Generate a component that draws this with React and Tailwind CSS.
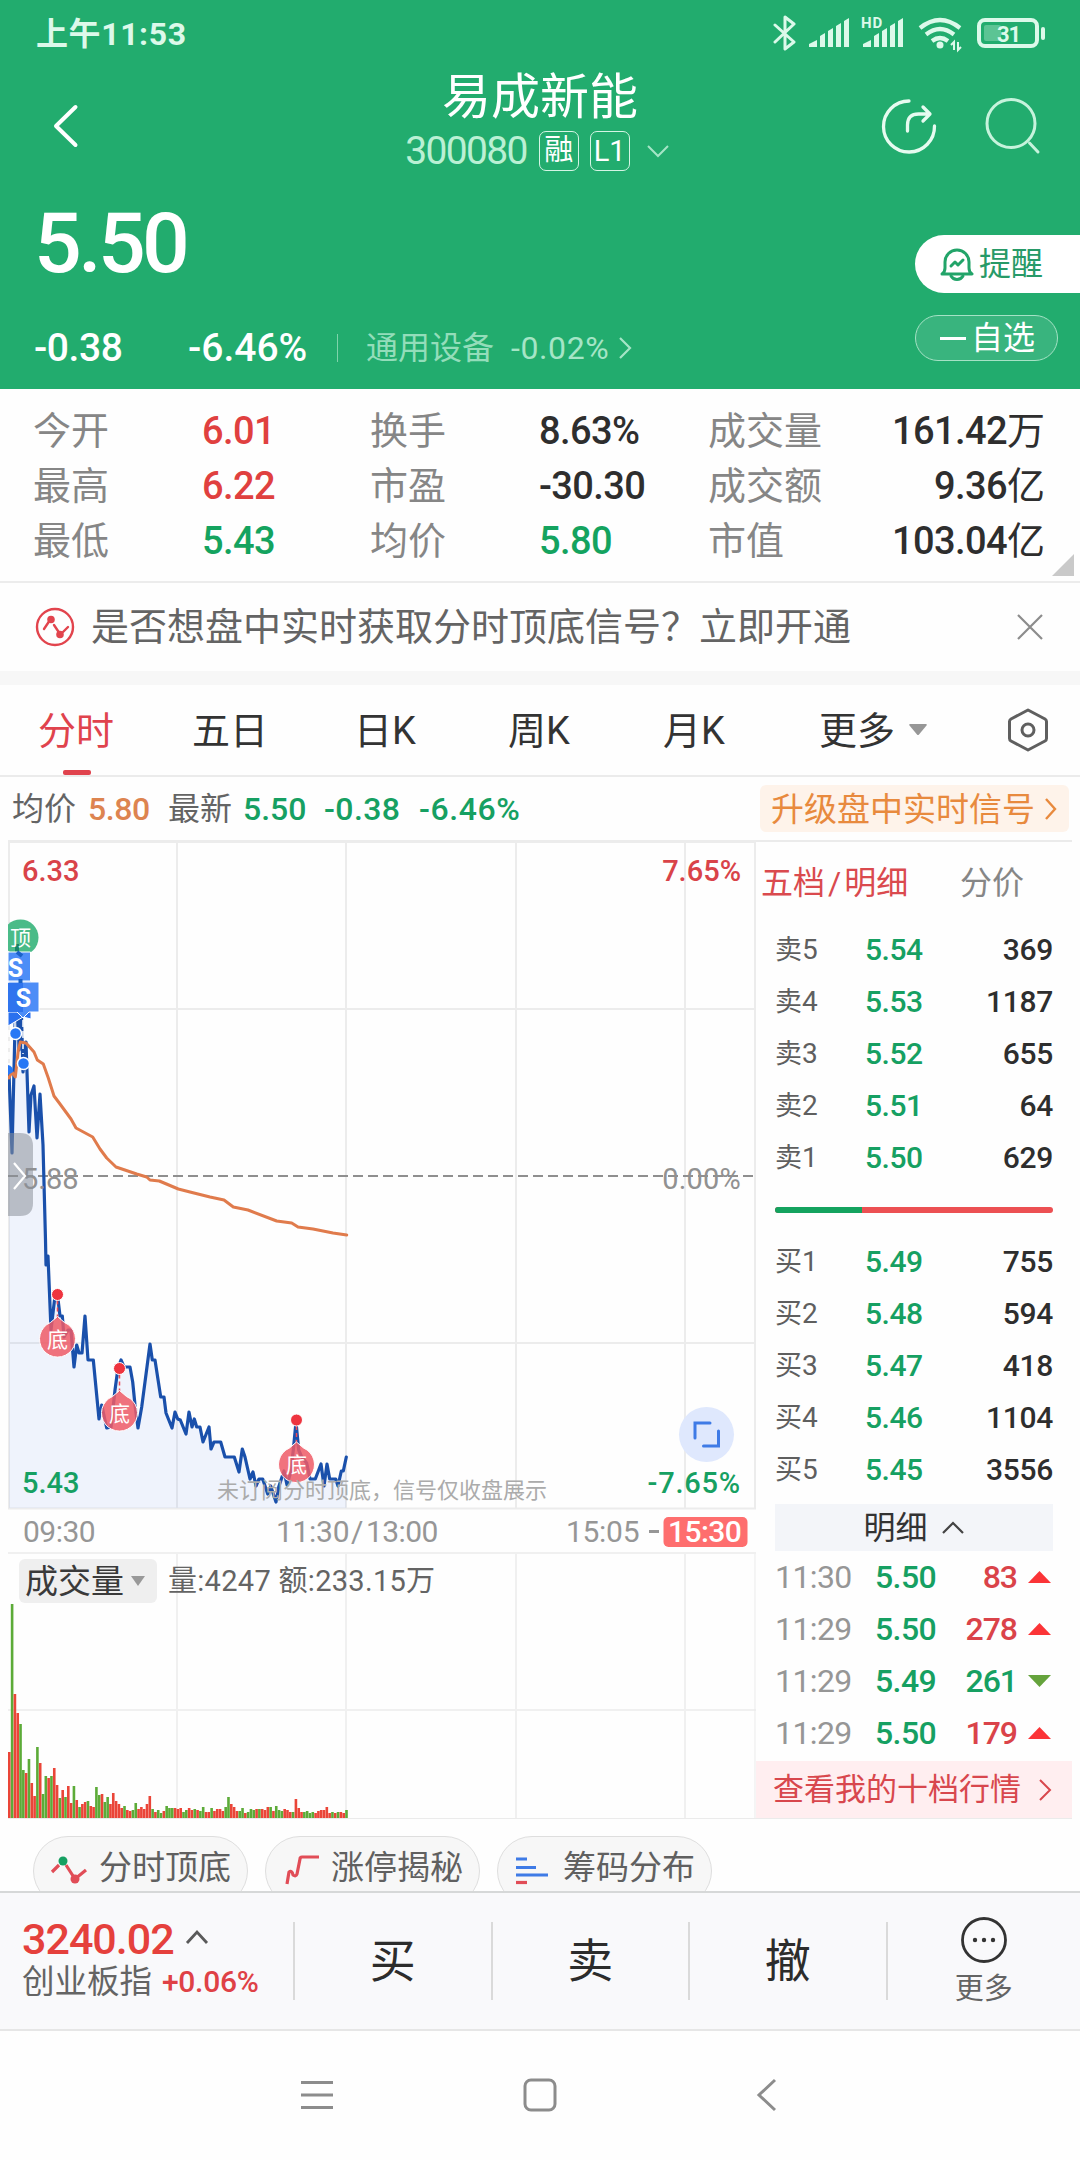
import React from 'react';
import clsx from 'clsx';

const stats = [
  { label: '今开', value: '6.01', color: 'text-[#e0403f]' },
  { label: '换手', value: '8.63%', color: 'text-[#2e2e2e]' },
  { label: '成交量', value: '161.42', unit: '万', color: 'text-[#2e2e2e]' },
  { label: '最高', value: '6.22', color: 'text-[#e0403f]' },
  { label: '市盈', value: '-30.30', color: 'text-[#2e2e2e]' },
  { label: '成交额', value: '9.36', unit: '亿', color: 'text-[#2e2e2e]' },
  { label: '最低', value: '5.43', color: 'text-[#14a35f]' },
  { label: '均价', value: '5.80', color: 'text-[#14a35f]' },
  { label: '市值', value: '103.04', unit: '亿', color: 'text-[#2e2e2e]' }
];

const sells = [
  ['卖5', '5.54', 369],
  ['卖4', '5.53', 1187],
  ['卖3', '5.52', 655],
  ['卖2', '5.51', 64],
  ['卖1', '5.50', 629]
];

const buys = [
  ['买1', '5.49', 755],
  ['买2', '5.48', 594],
  ['买3', '5.47', 418],
  ['买4', '5.46', 1104],
  ['买5', '5.45', 3556]
];

const trades = [
  { time: '11:30', price: '5.50', qty: 83, up: true },
  { time: '11:29', price: '5.50', qty: 278, up: true },
  { time: '11:29', price: '5.49', qty: 261, up: false },
  { time: '11:29', price: '5.50', qty: 179, up: true }
];

const pricePoints =
  '9,1073 12,1153 15,1027 17,945 19,1050 20.5,980 23,1072 26,1042 29,1132 31,1095 34,1086 37,1138 40,1094 43,1145 45.5,1240 ' +
  '46,1265 48,1256 51,1330 54.5,1300 57.5,1295 60,1316 62.3,1316 64,1337 68,1330 71,1330 74,1367 76.7,1345 79,1353 82,1353 ' +
  '85,1316 88,1360 93.3,1360 99,1419 101.7,1405 106.7,1428 111,1427 115,1390 118,1368 121,1360 124,1367 130,1367 132.7,1382 ' +
  '135,1405 138,1428 141.7,1407 150,1344 152.3,1360 155,1360 160.7,1397 164,1397 166,1413 172,1428 175,1412 177.7,1419 ' +
  '180.3,1420 186,1434 189,1412 192,1427 194.3,1419 196.7,1427 200,1427 203,1442 209,1427 211,1449 214,1442 220.7,1442 ' +
  '225,1457 234.3,1457 239,1472 242.3,1449 245,1457 250,1479 253,1472 256,1486 259,1479 262.7,1479 267.7,1494 270.7,1486 ' +
  '273,1493 276,1502 278.7,1487 284,1471 287,1485 290.7,1472 293.3,1450 296,1422 298.7,1450 301.7,1457 306.7,1463 310,1479 ' +
  '315.3,1479 321,1464 324,1486 327,1464 329.7,1479 335.7,1479 338,1486 341.3,1471 343.3,1471 346.3,1457';

const avgPoints =
  '8.7,1078 12,1072 15.3,1077 18.3,1050 20.3,1042 26,1043 34,1052 37.3,1060 43.3,1064 48.3,1078 54,1096 60,1104 71,1119 ' +
  '76,1128 92.7,1137 100,1149 106.7,1158 116,1167 136.7,1174 146.7,1177 150,1180 159.3,1181 178.3,1189 190,1192 210,1197 ' +
  '224,1200 233.3,1207 248,1210 276.7,1221 291.7,1223 298,1227 313,1229 333,1233 346.7,1235';

const volumes = [
  66, 214, 124, 105, 94, 48, 45, 59, 35, 22, 71, 55, 24, 42, 40, 42, 50, 33, 20, 28, 21, 32, 15, 32, 18, 11, 14, 16, 17, 12,
  11, 31, 23, 24, 16, 21, 14, 25, 17, 14, 10, 12, 8, 7, 8, 15, 9, 11, 9, 14, 22, 9, 6, 8, 5, 7, 12, 10, 10, 10,
  9, 10, 6, 8, 10, 8, 9, 8, 7, 11, 6, 6, 10, 7, 9, 9, 7, 11, 21, 14, 11, 7, 7, 10, 5, 6, 9, 8, 9, 9,
  9, 8, 11, 11, 7, 12, 8, 7, 9, 8, 6, 6, 19, 10, 6, 6, 7, 5, 6, 5, 7, 8, 8, 11, 5, 6, 5, 6, 6, 5, 8
];

// g = falling minute, r = rising minute
const volumeSides =
  'rgrrggrgrrgrggrgrrgrgrrgrgrrgrrggrggrrrrrgrrggrrrrrgrggrgggrrrggrrgrggrrgrrrrggrrrggrgggrgrrrgrgggrrrgrrrggggrrrrrrgrgrrgrrr';

function StatusBar() {
  return (
    <div className="h-[68px] pl-[36px] pr-[35px] flex items-center justify-between text-[#dcf9ea]">
      <div className="text-[32px] leading-none font-bold tracking-[0.6px]">上午11:53</div>
      <svg width="272" height="40" viewBox="773 14 272 40" fill="none">
        <path d="M775 25l19 17-9 7V17l9 7-19 18" stroke="currentColor" strokeWidth="3" strokeLinejoin="round" strokeLinecap="round" />
        <path d="M809 47v-3l8-4v7zM820 47V36l5-3v14zM828 47V31l5-3v19zM836 47V26l5-3v24zM844 47V21l5-3v29z" fill="currentColor" />
        <path d="M863 47v-3l8-4v7zM874 47V36l5-3v14zM882 47V31l5-3v19zM890 47V26l5-3v24zM898 47V21l5-3v29z" fill="currentColor" />
        <text x="861" y="28" fontSize="15" fontWeight="700" letterSpacing="1" fill="currentColor">HD</text>
        <path d="M920 28q20-16 40 0M926 34.500q14-11 28 0M932 41q8-6 16 0" stroke="currentColor" strokeWidth="4.200" />
        <circle cx="940" cy="45" r="3.500" fill="currentColor" />
        <path d="M954 50v-8l-3 3M958 42v8l3-3" stroke="currentColor" strokeWidth="2" />
        <rect x="979" y="20" width="58" height="26" rx="6" stroke="currentColor" strokeWidth="4" />
        <rect x="984" y="25" width="17" height="16" rx="2" fill="#5cc494" />
        <path d="M1043 29v9" stroke="currentColor" strokeWidth="4" strokeLinecap="round" />
        <text x="997" y="41.500" fontSize="22" fontWeight="700" letterSpacing="-1" fill="currentColor">31</text>
      </svg>
    </div>
  );
}

function TitleBar() {
  return (
    <div className="h-[116px] grid grid-cols-[380px_1fr_380px]">
      <div className="pl-[52px] pt-[35px]">
        <svg width="28" height="46" viewBox="0 0 28 46" fill="none" stroke="#fff" strokeWidth="4" strokeLinecap="round" strokeLinejoin="round">
          <path d="M23.500 4L4 23 23.500 42" />
        </svg>
      </div>
      <div className="flex flex-col items-center text-white">
        <div className="h-[58px] pt-px text-[49px] leading-[58px] whitespace-nowrap">易成新能</div>
        <div className="mt-[5px] ml-[-5px] h-[40px] flex items-center">
          <span className="text-[39px] leading-none tracking-[-1.7px] text-[#baf0d4]">300080</span>
          <span className="ml-[12px] w-[40px] h-[40px] rounded-[7px] border border-[#d5f5e5] text-[29px] leading-[37px] text-center">融</span>
          <span className="ml-[11px] w-[40px] h-[40px] rounded-[7px] border border-[#d5f5e5] text-[29px] leading-[38px] text-center">L1</span>
          <svg className="ml-[16px]" width="24" height="16" viewBox="0 0 24 16" fill="none" stroke="#a5e5c6" strokeWidth="2">
            <path d="M2 3l10 10L22 3" />
          </svg>
        </div>
      </div>
      <div className="flex items-start pt-[28px] pl-[180px] gap-[44px]">
        <svg width="60" height="60" viewBox="0 0 60 60" fill="none" stroke="#e6fbf0" strokeWidth="3.300" strokeLinecap="round" strokeLinejoin="round">
          <path d="M29 5a25.500 25.500 0 1 0 25.500 25" />
          <path d="M27.500 35v-6q0-11 11-11h11M43 11l7 7-7 7" />
        </svg>
        <svg width="60" height="60" viewBox="0 0 60 60" fill="none" stroke="#c6f3dc" strokeWidth="3" strokeLinecap="round">
          <circle cx="27" cy="27.500" r="24" />
          <path d="M45.500 47l8.500 9" />
        </svg>
      </div>
    </div>
  );
}

function Quote() {
  return (
    <div className="h-[205px] flex justify-between text-white">
      <div className="pl-[34px]">
        <div className="pt-[16px] text-[84px] leading-[88px] tracking-[-3.6px] font-medium">5.50</div>
        <div className="mt-[38px] h-[44px] flex items-center leading-none text-[39px] font-medium">
          <span className="w-[154px] tracking-[-0.4px]">-0.38</span>
          <span className="w-[149px] tracking-[0px]">-6.46%</span>
          <span className="w-px h-[28px] bg-[#7fd3ab]" />
          <span className="ml-[28px] text-[32px] font-normal text-[#93ddba]">通用设备</span>
          <span className="ml-[17px] text-[32px] font-normal text-[#a5e5c6] tracking-[0.6px]">-0.02%</span>
          <svg className="ml-[8px]" width="16" height="26" viewBox="0 0 16 26" fill="none" stroke="#a5e5c6" strokeWidth="2.200">
            <path d="M3 3l10 10L3 23" />
          </svg>
        </div>
      </div>
      <div className="w-[165px] pt-[51px]">
        <div className="h-[58px] rounded-l-full bg-white pl-[25px] flex items-center text-[#279a68] text-[32px] leading-none">
          <svg width="34" height="36" viewBox="0 0 34 36" fill="none" stroke="#22a469" strokeWidth="3" strokeLinecap="round" strokeLinejoin="round">
            <path d="M2 28q3-2 3-6v-6a12 12 0 0 1 24 0v6q0 4 3 6z" />
            <path d="M11 30q2 3.500 6 3.500t6-3.500" />
            <path d="M11 20l4-4 3 3 5-5" />
          </svg>
          <span className="ml-[5px]">提醒</span>
        </div>
        <div className="mt-[22px] w-[143px] h-[46px] rounded-full border border-[#a5e2c5] bg-[#39b47e] pl-[24px] flex items-center text-[32px] leading-none">
          <span className="w-[26px] h-[3px] bg-white" />
          <span className="ml-[5px]">自选</span>
        </div>
      </div>
    </div>
  );
}

function Stats() {
  return (
    <div className="relative h-[194px] pt-[14px] pl-[33px] pr-[35px] grid grid-cols-[337px_338px_1fr] auto-rows-[55px] border-b-2 border-[#ececec]">
      {stats.map((item) => (
        <div key={item.label} className="flex items-center leading-none">
          <span className={clsx('text-[38px] text-[#868686]', !item.unit && 'w-[169px]')}>{item.label}</span>
          <span className={clsx('text-[38px] font-medium tracking-[-0.6px]', item.unit && 'ml-auto', item.color)}>
            {item.value}
            {item.unit && <span className="font-normal tracking-normal">{item.unit}</span>}
          </span>
        </div>
      ))}
      <svg className="absolute right-[6px] bottom-[5px]" width="22" height="22" viewBox="0 0 22 22">
        <path d="M22 0v22H0z" fill="#c9c9c9" />
      </svg>
    </div>
  );
}

function Banner() {
  return (
    <div className="h-[88px] pl-[35px] pr-[35px] flex items-center">
      <svg width="40" height="40" viewBox="0 0 40 40" fill="none" stroke="#e2444d" strokeWidth="2.400" strokeLinecap="round">
        <circle cx="20" cy="20" r="18" />
        <path d="M9 22l6-9M19 18l6 9M28 25l5-5" />
        <circle cx="16" cy="12.500" r="2.600" fill="#e2444d" />
        <circle cx="25" cy="27.500" r="2.600" fill="#e2444d" />
      </svg>
      <span className="ml-[16px] text-[38px] leading-none text-[#646464] whitespace-nowrap">是否想盘中实时获取分时顶底信号？立即开通</span>
      <svg className="ml-auto" width="30" height="30" viewBox="0 0 30 30" fill="none" stroke="#8c8c8c" strokeWidth="2.200">
        <path d="M3 3l24 24M27 3L3 27" />
      </svg>
    </div>
  );
}

function Tabs() {
  return (
    <div className="h-[92px] pl-[38px] pr-[31px] flex items-center border-b-2 border-[#ebebeb] text-[38px] leading-none text-[#333]">
      <div className="relative w-[154px] h-[90px] pt-[2px] flex items-center text-[#e0434d]">
        分时
        <span className="absolute left-[25px] bottom-0 w-[28px] h-[5px] rounded-[2px] bg-[#e0434d]" />
      </div>
      <span className="w-[162px] pt-[2px]">五日</span>
      <span className="w-[154px] pt-[2px]">日K</span>
      <span className="w-[155px] pt-[2px]">周K</span>
      <span className="w-[156px] pt-[2px]">月K</span>
      <span className="pt-[2px]">更多</span>
      <svg className="ml-[13px]" width="20" height="14" viewBox="0 0 20 14">
        <path d="M2 1h16q1.500 0 .5 1.500l-7.500 9q-1 1-2 0l-7.500-9Q.5 1 2 1z" fill="#979797" />
      </svg>
      <svg className="ml-auto" width="42" height="46" viewBox="0 0 42 46" fill="none" stroke="#5f5f5f" strokeWidth="3" strokeLinejoin="round">
        <path d="M21 3l17 9q1.500 1 1.500 2.500v17q0 1.500-1.500 2.500l-17 9-17-9q-1.500-1-1.500-2.500v-17q0-1.500 1.500-2.500z" />
        <circle cx="21" cy="23" r="6" />
      </svg>
    </div>
  );
}

function InfoRow() {
  return (
    <div className="h-[63px] pl-[12px] pr-[11px] flex items-center text-[32px] leading-none text-[#646464]">
      <span>均价</span>
      <span className="ml-[12px] w-[80px] font-medium tracking-[-0.4px] text-[#dd8450]">5.80</span>
      <span>最新</span>
      <span className="ml-[11px] w-[81px] font-medium tracking-[0px] text-[#16a062]">5.50</span>
      <span className="w-[95px] font-medium tracking-[0.4px] text-[#16a062]">-0.38</span>
      <span className="font-medium tracking-[0.6px] text-[#16a062]">-6.46%</span>
      <div className="ml-auto w-[309px] h-[47px] rounded-[6px] bg-[#fef3ea] pl-[11px] pr-[11px] flex items-center justify-between text-[#e88a3e] text-[33px] whitespace-nowrap">
        <span className="pt-px">升级盘中实时信号</span>
        <svg width="14" height="24" viewBox="0 0 14 24" fill="none" stroke="#e88a3e" strokeWidth="2.400">
          <path d="M2 2l9 10-9 10" />
        </svg>
      </div>
    </div>
  );
}

function Pin({ x, y }) {
  return (
    <g>
      <path d={`M${x} ${y + 6}v18`} stroke="#ee4a55" strokeWidth="1.500" strokeDasharray="4 3" />
      <path
        d={`M${x} ${y + 22}l7 6a18 18 0 1 1 -14 0z`}
        fill="#ef5a66"
        fillOpacity="0.85"
        stroke="#fff"
        strokeWidth="1"
      />
      <circle cx={x} cy={y} r="6" fill="#ee343f" stroke="#fff" />
      <text x={x} y={y + 52} textAnchor="middle" fontSize="21" fill="#fff">底</text>
    </g>
  );
}

// the viewBox is in page pixels
function Charts() {
  return (
    <div className="relative w-[748px] h-[980px] ml-[8px]">
      <svg width="748" height="980" viewBox="8 840 748 980" fill="none">
        <g stroke="#ececec" strokeWidth="2">
          <path d="M177 843v666M346 843v666M516 843v666M685 843v666M8 1009h748M8 1343h748" />
          <path d="M177 1554v264M346 1554v264M516 1554v264M685 1554v264M8 1553h748M8 1710h748" stroke="#f0f0f0" />
          <path d="M8 1818.500h748M755 1554v264" stroke="#ebebeb" strokeWidth="1" />
          <path d="M8 841.500h748" strokeWidth="3" />
          <path d="M9 841v668M755 841v668M8 1508.500h748" />
        </g>

        <polygon points={`9,1508 ${pricePoints} 346.3,1508`} fill="#3b78e7" fillOpacity="0.08" />
        <path d="M8 1176h747" stroke="#8f8f8f" strokeWidth="2" strokeDasharray="10 5" />
        <polyline points={pricePoints} stroke="#1a50ab" strokeWidth="3.200" strokeLinejoin="round" strokeLinecap="round" />

        <g fontSize="29">
          <g fill="#919191">
            <text x="22" y="1189">5.88</text>
            <text x="741" y="1189" textAnchor="end" letterSpacing="0.2">0.00%</text>
          </g>
          <g fontWeight="500">
            <text x="22" y="881" fill="#d94349">6.33</text>
            <text x="741" y="881" fill="#d94349" textAnchor="end">7.65%</text>
            <text x="22" y="1493" fill="#16a062">5.43</text>
            <text x="741" y="1493" fill="#16a062" letterSpacing="0.8" textAnchor="end">-7.65%</text>
          </g>
        </g>

        {/* top / sell markers */}
        <circle cx="20.500" cy="937.500" r="18" fill="#4abb88" />
        <path d="M17 944v9" stroke="#16856a" strokeWidth="4" />
        <text x="20.500" y="945" textAnchor="middle" fontSize="21" fill="#fff">顶</text>
        <path d="M8 981h23v38l-8-2-15 9z" fill="#2a70ee" stroke="#fff" strokeWidth="1" />
        <path d="M8 952h22.500v29H8z" fill="#4d8df7" stroke="#fff" strokeWidth="1" />
        <path d="M8 982h31v30h-10l-6 6-6-6H8z" fill="#4d8df7" stroke="#fff" strokeWidth="1" />
        <path d="M8 983h15v29H8z" fill="#2f74ee" />
        <path d="M20.500 979v4M17 952l5 4" stroke="#1a62c8" strokeWidth="4" />
        <path d="M9 1030v40M15 1022v9M23 1020v34" stroke="#fff" strokeWidth="1.500" strokeDasharray="7 4" />
        <g fontSize="25" fontWeight="700" fill="#fff" textAnchor="middle">
          <text x="15.500" y="976.500">S</text>
          <text x="23.500" y="1006.500">S</text>
        </g>
        <polyline points={avgPoints} stroke="#e07b4c" strokeWidth="3" strokeLinejoin="round" strokeLinecap="round" />
        <g fill="#2878f5" stroke="#fff" strokeWidth="1.500">
          <path d="M8 1065a6 6 0 0 1 5 7l-5 3z" stroke="none" />
          <circle cx="15.500" cy="1033.500" r="6" />
          <circle cx="23.500" cy="1063.500" r="6" />
        </g>

        <Pin x={57.5} y={1294.5} />
        <Pin x={119.5} y={1368.5} />
        <Pin x={296.5} y={1420} />

        <path d="M8 1133h12q13 0 13 13v57q0 13-13 13H8z" fill="#8b8f99" fillOpacity="0.55" />
        <path d="M14 1163l11 13-11 13" stroke="#fff" strokeWidth="2.200" />

        <text x="217" y="1498" fontSize="22" fill="#ababab">未订阅分时顶底，信号仅收盘展示</text>

        <circle cx="706.500" cy="1434.500" r="27.500" fill="#dfe8fd" />
        <path d="M695 1438v-15h15M718.500 1431v15h-15" stroke="#3f7be6" strokeWidth="3" strokeLinecap="round" />

        <g fontSize="30" fill="#969696">
          <text x="23" y="1542" letterSpacing="-0.5">09:30</text>
          <text x="276" y="1542" letterSpacing="-0.3">11:30</text>
          <text x="351" y="1542">/</text>
          <text x="366" y="1542" letterSpacing="-0.6">13:00</text>
          <text x="566" y="1542" letterSpacing="-0.3">15:05</text>
          <path d="M649 1531.500h10" stroke="#969696" strokeWidth="3" />
          <rect x="663.500" y="1517" width="84" height="30" rx="5" fill="#fe6e6e" />
          <text x="668" y="1542" letterSpacing="-0.6" fontWeight="500" fill="#fff">15:30</text>
        </g>

        {volumes.map((h, i) => (
          <rect
            key={i}
            x={8 + i * 2.81}
            y={1818 - h}
            width="2.600"
            height={h}
            fill={volumeSides[i] === 'g' ? '#5cab38' : '#ea4538'}
          />
        ))}
      </svg>
      <div className="absolute left-[11px] top-[719px] h-[44px] flex items-center leading-none">
        <div className="w-[138px] h-[44px] rounded-[6px] bg-[#efefef] pl-[6px] flex items-center text-[33px] text-[#3a3a3a]">
          <span className="w-[106px]">成交量</span>
          <svg width="14" height="10" viewBox="0 0 14 10">
            <path d="M0 0h14L7 10z" fill="#999" />
          </svg>
        </div>
        <span className="ml-[11px] text-[29px] tracking-[0.3px] text-[#646464]">量:4247 额:233.15万</span>
      </div>
    </div>
  );
}

function DepthRow({ row }) {
  return (
    <div className="h-[52px] flex items-center leading-none">
      <span className="w-[90px] text-[27px] text-[#5f5f5f]">
        {row[0][0]}
        <span className="text-[28px]">{row[0][1]}</span>
      </span>
      <span className="text-[30px] font-medium tracking-[-0.5px] text-[#16a062]">{row[1]}</span>
      <span className="ml-auto text-[30px] font-medium tracking-[-0.3px] text-[#2e2e2e]">{row[2]}</span>
    </div>
  );
}

function OrderBook() {
  return (
    <div className="w-[316px] h-[979px] border-t-2 border-b-2 border-[#ebebeb]">
      <div className="h-[82px] pl-[5px] flex items-center text-[32px] leading-none">
        <span className="w-[199px] text-[#da4a4e]">五档<span className="mx-[3px]">/</span>明细</span>
        <span className="text-[#868686]">分价</span>
      </div>
      <div className="pl-[19px] pr-[19px]">
        {sells.map((row) => (
          <DepthRow key={row[0]} row={row} />
        ))}
        <div className="h-[52px] flex items-center">
          <div className="w-full h-[6px] rounded-full overflow-hidden flex bg-[#ec5053]">
            <div className="w-[87px] bg-[#14a35f]" />
          </div>
        </div>
        {buys.map((row) => (
          <DepthRow key={row[0]} row={row} />
        ))}
        <div className="mt-[8px] h-[47px] bg-[#f3f5f9] flex items-center justify-center gap-[13px] text-[32px] leading-none text-[#333]">
          <span>明细</span>
          <svg width="24" height="14" viewBox="0 0 24 14" fill="none" stroke="#444" strokeWidth="2.200">
            <path d="M2 12L12 2l10 10" />
          </svg>
        </div>
        {trades.map((t, i) => (
          <div key={i} className="h-[52px] flex items-center text-[32px] leading-none font-medium">
            <span className="w-[100px] font-normal tracking-[-0.6px] text-[#969696]">{t.time}</span>
            <span className="text-[#16a062] tracking-[-0.6px]">{t.price}</span>
            <span className={clsx('ml-auto tracking-[-1px]', t.up ? 'text-[#da4349]' : 'text-[#16a062]')}>{t.qty}</span>
            <svg className="ml-[11px] mr-[2px]" width="23" height="12" viewBox="0 0 23 12">
              {t.up ? <path d="M11.500 0L23 12H0z" fill="#fb3437" /> : <path d="M0 0h23L11.500 12z" fill="#65a33c" />}
            </svg>
          </div>
        ))}
      </div>
      <div className="h-[57px] mt-[2px] bg-[#ffeef0] pl-[17px] pr-[19px] flex items-center justify-between text-[31px] leading-none text-[#d8474d]">
        <span>查看我的十档行情</span>
        <svg width="15" height="24" viewBox="0 0 15 24" fill="none" stroke="#d8474d" strokeWidth="2">
          <path d="M2 2l10 10L2 22" />
        </svg>
      </div>
    </div>
  );
}

function Chip({ label, children }) {
  return (
    <div className="w-[215px] h-[70px] shrink-0 rounded-full border border-[#dedede] bg-[#f7f7f7] pl-[15px] flex items-center text-[33px] leading-none text-[#606060]">
      <svg className="mb-[3px]" width="40" height="36" viewBox="0 0 40 36" fill="none" strokeWidth="3.200">
        {children}
      </svg>
      <span className="ml-[10px] pb-[8px]">{label}</span>
    </div>
  );
}

function Chips() {
  return (
    <div className="h-[72px] pt-[17px] pl-[33px] flex gap-[17px] overflow-hidden">
      <Chip label="分时顶底">
        <path d="M3 20l7-7M17 13l9 14 11-9" stroke="#e14d57" />
        <circle cx="14" cy="9" r="4.500" fill="#16a062" />
        <circle cx="26" cy="27" r="4.500" fill="#e14d57" />
      </Chip>
      <Chip label="涨停揭秘">
        <path d="M6 32l2-12q3-2 4 3 3 2 4-1l3-15q0-2 2-2h17" stroke="#e14d57" strokeLinejoin="round" />
      </Chip>
      <Chip label="筹码分布">
        <path d="M3 7h11M3 15.500h20M3 23h32" stroke="#3f7be6" />
        <path d="M3 30.500h11" stroke="#e14d57" />
      </Chip>
    </div>
  );
}

function BottomBar() {
  return (
    <div className="h-[140px] border-t-2 border-t-[#d6d8d8] border-b-2 border-b-[#e6e6e6] bg-[#f9f9fb] flex items-center">
      <div className="w-[293px] pl-[22px] leading-none">
        <div className="flex items-center h-[42px] text-[43px] font-medium tracking-[-1px] text-[#e5403c]">
          3240.02
          <svg className="ml-[11px] mb-[6px]" width="24" height="16" viewBox="0 0 24 16" fill="none" stroke="#5a5a5a" strokeWidth="2.800">
            <path d="M2 14L12 3l10 11" />
          </svg>
        </div>
        <div className="flex items-center h-[43px] text-[32.5px] text-[#646464]">
          创业板指
          <span className="ml-[10px] text-[30px] font-medium tracking-[-0.3px] text-[#df4146]">+0.06%</span>
        </div>
      </div>
      {['买', '卖', '撤'].map((name) => (
        <div key={name} className="w-[197.5px] h-[78px] border-l-2 border-[#dadada] flex items-center justify-center text-[46px] leading-none text-[#2c2c2c]">
          {name}
        </div>
      ))}
      <div className="flex-1 h-[78px] border-l-2 border-[#dadada] flex flex-col items-center justify-center">
        <svg className="shrink-0" width="48" height="48" viewBox="0 0 48 48" fill="none">
          <circle cx="24" cy="24" r="21.500" stroke="#333" strokeWidth="2.800" />
          <circle cx="15" cy="24" r="2.200" fill="#333" />
          <circle cx="24" cy="24" r="2.200" fill="#333" />
          <circle cx="33" cy="24" r="2.200" fill="#333" />
        </svg>
        <span className="mt-[8px] text-[29px] leading-[34px] text-[#646464]">更多</span>
      </div>
    </div>
  );
}

function NavBar() {
  return (
    <div className="h-[129px] pl-[300px] pr-[302px] pb-[2px] flex items-center">
      <svg width="34" height="34" viewBox="0 0 34 34" stroke="#8c8c8c" strokeWidth="3">
        <path d="M1 4.500h32M1 17h32M1 29.500h32" />
      </svg>
      <svg className="ml-[189px]" width="34" height="34" viewBox="0 0 34 34" fill="none" stroke="#8c8c8c" strokeWidth="3">
        <rect x="2" y="2" width="30" height="30" rx="6" />
      </svg>
      <svg className="ml-auto" width="22" height="34" viewBox="0 0 22 34" fill="none" stroke="#8c8c8c" strokeWidth="3">
        <path d="M19 2L3 17l16 15" />
      </svg>
    </div>
  );
}

export default function App() {
  return (
    <div className="w-[1080px] h-[2160px] overflow-hidden bg-[#fefefe] font-['Roboto','Noto_Sans_CJK_SC',sans-serif]">
      <header className="h-[389px] bg-[#22ac6e]">
        <StatusBar />
        <TitleBar />
        <Quote />
      </header>
      <Stats />
      <Banner />
      <div className="h-[14px] bg-[#f7f7f7]" />
      <Tabs />
      <InfoRow />
      <div className="flex h-[979px]">
        <Charts />
        <OrderBook />
      </div>
      <Chips />
      <BottomBar />
      <NavBar />
    </div>
  );
}
